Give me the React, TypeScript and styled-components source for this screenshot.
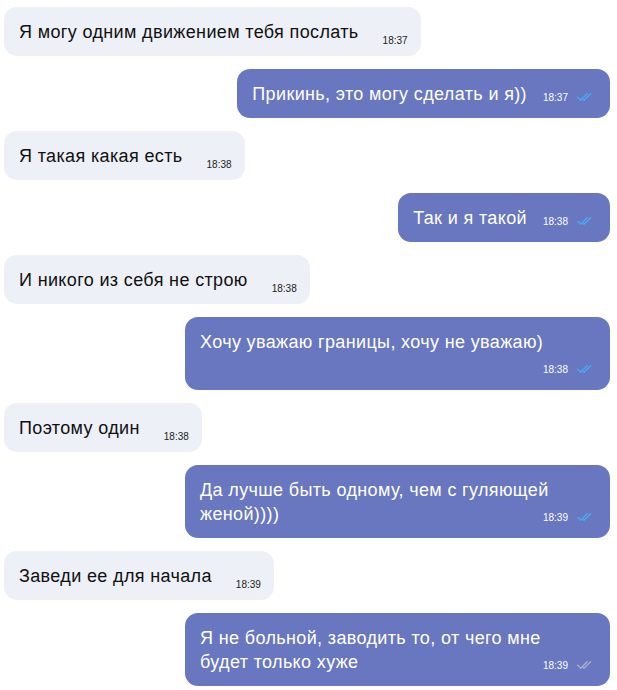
import React from 'react'
import styled, { createGlobalStyle } from 'styled-components'

const GlobalStyle = createGlobalStyle`
  html, body {
    margin: 0;
    padding: 0;
    background: #ffffff;
  }
  body {
    font-family: 'Liberation Sans', Arial, sans-serif;
  }
`

const Feed = styled.div`
  display: flex;
  flex-direction: column;
  gap: 13px;
  padding: 7px 7px 4px 4px;
`

const Row = styled.div<{ $out: boolean }>`
  display: flex;
  justify-content: ${({ $out }) => ($out ? 'flex-end' : 'flex-start')};
`

const Bubble = styled.div<{ $out: boolean }>`
  max-width: 425px;
  box-sizing: border-box;
  display: flow-root;
  padding: 12.5px ${({ $out }) => ($out ? '17px' : '13px')} 12.5px 15px;
  border-radius: 13px;
  font-size: 18px;
  line-height: 24px;
  letter-spacing: 0.36px;
  color: ${({ $out }) => ($out ? '#ffffff' : '#111111')};
  background: ${({ $out }) => ($out ? '#6877bf' : '#edf0f7')};
`

const Meta = styled.span<{ $out: boolean }>`
  float: right;
  box-sizing: border-box;
  height: 24px;
  padding-top: ${({ $out }) => ($out ? '10px' : '15px')};
  margin-left: ${({ $out }) => ($out ? '16px' : '24px')};
  font-size: 10px;
  line-height: 12px;
  letter-spacing: 0;
  white-space: nowrap;
`

const Time = styled.span<{ $out: boolean }>`
  color: ${({ $out }) => ($out ? '#ffffff' : '#222222')};
`

const Check = styled.svg`
  display: inline-block;
  vertical-align: baseline;
  margin-left: 9px;
`

type Message = {
  text: string
  time: string
  out: boolean
  read?: boolean
}

const messages: Message[] = [
  { text: 'Я могу одним движением тебя послать', time: '18:37', out: false },
  { text: 'Прикинь, это могу сделать и я))', time: '18:37', out: true, read: true },
  { text: 'Я такая какая есть', time: '18:38', out: false },
  { text: 'Так и я такой', time: '18:38', out: true, read: true },
  { text: 'И никого из себя не строю', time: '18:38', out: false },
  { text: 'Хочу уважаю границы, хочу не уважаю)', time: '18:38', out: true, read: true },
  { text: 'Поэтому один', time: '18:38', out: false },
  { text: 'Да лучше быть одному, чем с гуляющей женой))))', time: '18:39', out: true, read: true },
  { text: 'Заведи ее для начала', time: '18:39', out: false },
  { text: 'Я не больной, заводить то, от чего мне будет только хуже', time: '18:39', out: true, read: false },
]

const DoubleCheck = ({ read }: { read: boolean }) => (
  <Check width="16" height="8" viewBox="0 0 16 8" fill="none">
    <g
      stroke={read ? '#4aa9ef' : '#a9aec4'}
      strokeWidth="1.4"
      strokeLinecap="round"
      strokeLinejoin="round"
    >
      <path d="M0.8 4.2 L3.7 7.2 L10.2 0.8" />
      <path d="M6.2 6.4 L7 7.2 L13.6 0.8" />
    </g>
  </Check>
)

export default function App() {
  return (
    <>
      <GlobalStyle />
      <Feed>
        {messages.map((m, idx) => (
          <Row $out={m.out} key={`msg-${idx}`}>
            <Bubble $out={m.out}>
              {m.text}
              <Meta $out={m.out}>
                <Time $out={m.out}>{m.time}</Time>
                {m.out && <DoubleCheck read={!!m.read} />}
              </Meta>
            </Bubble>
          </Row>
        ))}
      </Feed>
    </>
  )
}
